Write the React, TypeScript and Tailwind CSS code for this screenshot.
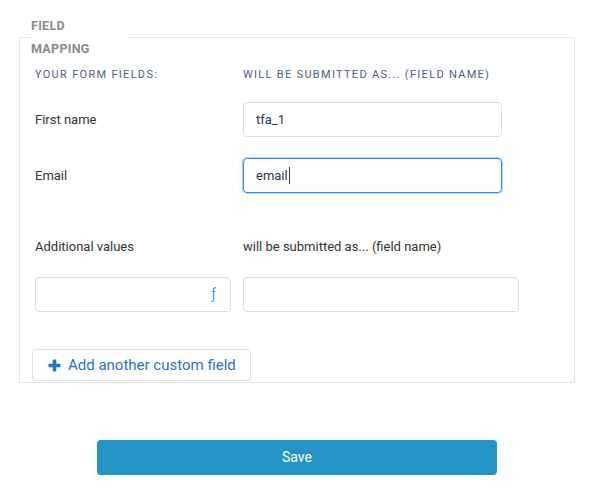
import React from "react";

export default function App() {
  return (
    <div className="w-[594px] h-[502px] bg-white pt-[14px]" style={{ fontFamily: "Roboto, 'Liberation Sans', sans-serif" }}>
      <fieldset className="ml-[19px] w-[556px] border border-[#e6e6e6] pb-[1px]">
        <legend className="ml-[11px] w-[96px] text-[12.5px] font-bold leading-[23px] text-[#8a8a8a] tracking-[0.3px]">
          FIELD
          <br />
          MAPPING
        </legend>
        <div className="pl-[15px]">
          <div className="grid grid-cols-[208px_1fr] mt-[7px] text-[11px] leading-[16px] tracking-[1.3px] text-[#4c5e82]">
            <div>YOUR FORM FIELDS:</div>
            <div>WILL BE SUBMITTED AS... (FIELD NAME)</div>
          </div>
          <div className="grid grid-cols-[208px_1fr] items-center mt-[19px]">
            <div className="text-[13px] text-[#333]">First name</div>
            <div className="w-[259px] h-[35px] border border-[#d7dce6] rounded-[4px] flex items-center pl-[12px] text-[13px] text-[#2b3853]">tfa_1</div>
          </div>
          <div className="grid grid-cols-[208px_1fr] items-center mt-[21px]">
            <div className="text-[13px] text-[#333]">Email</div>
            <div className="w-[259px] h-[35px] border border-[#2f8ce6] rounded-[4px] shadow-[0_0_0_1px_rgba(47,140,230,0.35)] flex items-center pl-[12px] text-[13px] text-[#2b3853]">
              email<span className="inline-block w-[1px] h-[17px] bg-[#2b3853] ml-[1px]"></span>
            </div>
          </div>
          <div className="grid grid-cols-[208px_1fr] mt-[44px] text-[13px] leading-[20px] text-[#333]">
            <div>Additional values</div>
            <div>will be submitted as... (field name)</div>
          </div>
          <div className="grid grid-cols-[208px_1fr] mt-[20px]">
            <div className="w-[196px] h-[35px] border border-[#d7dce6] rounded-[4px] flex items-center justify-end pr-[14px]">
              <span className="text-[14px] text-[#4aa3d6]">ƒ</span>
            </div>
            <div className="w-[276px] h-[35px] border border-[#d7dce6] rounded-[4px]"></div>
          </div>
          <button className="mt-[37px] -ml-[3px] h-[32px] w-[219px] border border-[#d9e0e8] rounded-[4px] bg-white flex items-center pl-[15px] gap-[7px] text-[15px] text-[#1f76c9]">
            <svg width="13" height="13" viewBox="0 0 13 13">
              <rect x="4.75" y="0.5" width="3.5" height="12" rx="0.8" fill="#1f76c9" />
              <rect x="0.5" y="4.75" width="12" height="3.5" rx="0.8" fill="#1f76c9" />
            </svg>
            Add another custom field
          </button>
        </div>
      </fieldset>
      <div className="flex justify-center mt-[57px]">
        <button className="w-[400px] h-[35px] rounded-[4px] bg-[#2394c4] text-white text-[14px]">Save</button>
      </div>
    </div>
  );
}
